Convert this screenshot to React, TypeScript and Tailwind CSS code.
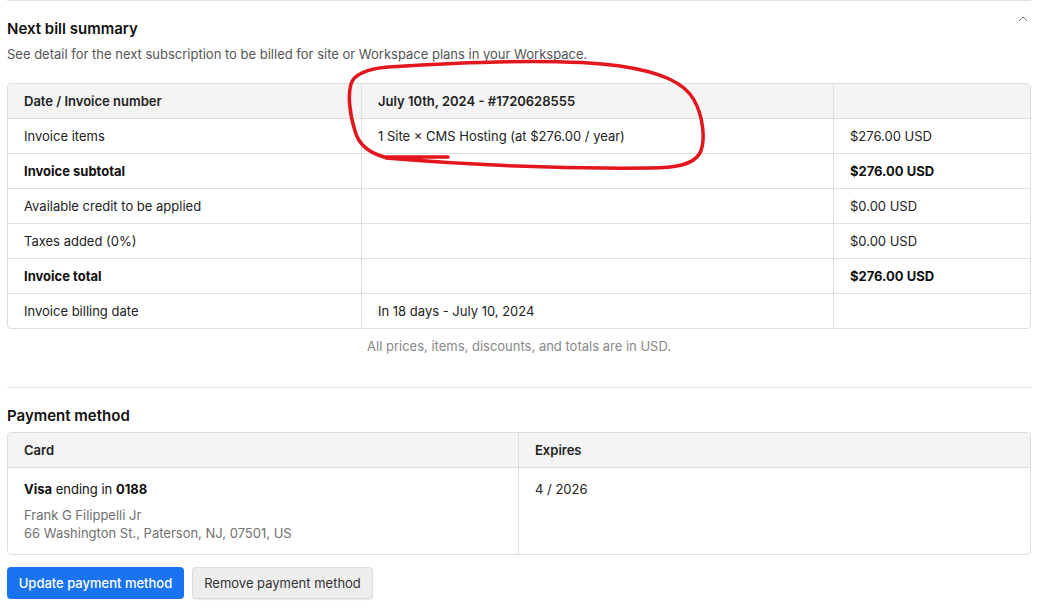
import React from 'react'

const SUMMARY_ROWS = [
  { label: 'Invoice items', detail: '1 Site × CMS Hosting (at $276.00 / year)', amount: '$276.00 USD', bold: false },
  { label: 'Invoice subtotal', detail: '', amount: '$276.00 USD', bold: true },
  { label: 'Available credit to be applied', detail: '', amount: '$0.00 USD', bold: false },
  { label: 'Taxes added (0%)', detail: '', amount: '$0.00 USD', bold: false },
  { label: 'Invoice total', detail: '', amount: '$276.00 USD', bold: true },
  { label: 'Invoice billing date', detail: 'In 18 days - July 10, 2024', amount: '', bold: false },
]

// hand-drawn red circle from the screenshot annotation
const Annotation: React.FC = () => (
  <svg className="pointer-events-none absolute left-0 top-0" width={1051} height={611} viewBox="0 0 1051 611">
    <path
      d="M 448 157 L 384 157 C 370 153 359 146 355 131 C 349 112 348 94 351 84 C 354 74 366 69 388 67 C 450 63 560 58 620 66 C 660 72 684 82 694 100 C 703 116 706 140 700 153 C 693 165 675 168 650 168 C 560 169 470 165 386 158"
      fill="none"
      stroke="#e2161c"
      strokeWidth={3.5}
      strokeLinecap="round"
      strokeLinejoin="round"
    />
  </svg>
)

const App: React.FC = () => {
  return (
    <div className="relative min-h-screen bg-white font-['Inter','Noto_Sans',sans-serif] text-[13px] text-[#222]">
      <div className="pl-[7px] pr-[20px]">
        <section className="border-t border-[#e2e2e2]">
          <div className="flex items-start justify-between pt-[18px]">
            <h2 className="text-[15px] font-semibold leading-[20px] text-[#111]">Next bill summary</h2>
            <svg width={12} height={12} viewBox="0 0 12 12" className="mt-[-6px] mr-[2px] text-[#777]">
              <polyline points="2,8 6,4 10,8" fill="none" stroke="currentColor" strokeWidth={1} />
            </svg>
          </div>
          <p className="mt-[6px] leading-[18px] text-[#555]">
            See detail for the next subscription to be billed for site or Workspace plans in your Workspace.
          </p>

          <div className="mt-[20px] overflow-hidden rounded-[4px] border border-[#dedede]">
            <div className="grid grid-cols-[353px_472px_1fr] bg-[#f4f4f4] font-semibold">
              <div className="flex h-[34px] items-center px-4 pt-[2px]">Date / Invoice number</div>
              <div className="flex h-[34px] items-center border-l border-[#dedede] px-4 pt-[2px]">July 10th, 2024 - #1720628555</div>
              <div className="flex h-[34px] items-center border-l border-[#dedede] px-4 pt-[2px]"></div>
            </div>
            {SUMMARY_ROWS.map(row => (
              <div
                key={row.label}
                className={`grid grid-cols-[353px_472px_1fr] border-t border-[#dedede] ${row.bold ? 'font-bold text-[#111]' : ''}`}
              >
                <div className="flex h-[34px] items-center px-4 pt-[2px]">{row.label}</div>
                <div className="flex h-[34px] items-center border-l border-[#dedede] px-4 pt-[2px]">{row.detail}</div>
                <div className="flex h-[34px] items-center border-l border-[#dedede] px-4 pt-[2px]">{row.amount}</div>
              </div>
            ))}
          </div>
          <p className="mt-[8px] text-center leading-[18px] text-[#888]">
            All prices, items, discounts, and totals are in USD.
          </p>
        </section>

        <section className="mt-[32px] border-t border-[#e2e2e2]">
          <h2 className="mt-[18px] text-[15px] font-semibold leading-[20px] text-[#111]">Payment method</h2>
          <div className="mt-[6px] overflow-hidden rounded-[4px] border border-[#dedede]">
            <div className="grid grid-cols-[510px_1fr] bg-[#f4f4f4] font-semibold">
              <div className="flex h-[34px] items-center px-4 pt-[2px]">Card</div>
              <div className="flex h-[34px] items-center border-l border-[#dedede] px-4 pt-[2px]">Expires</div>
            </div>
            <div className="grid grid-cols-[510px_1fr] border-t border-[#dedede]">
              <div className="px-4 pb-3 pt-3 leading-[18px]">
                <div className="text-[#111]">
                  <span className="font-bold">Visa</span> ending in <span className="font-bold">0188</span>
                </div>
                <div className="mt-[8px] text-[#707070]">Frank G Filippelli Jr</div>
                <div className="text-[#707070]">66 Washington St., Paterson, NJ, 07501, US</div>
              </div>
              <div className="border-l border-[#dedede] px-4 pt-3 leading-[18px]">4 / 2026</div>
            </div>
          </div>

          <div className="mt-3 flex gap-2">
            <button className="h-[32px] w-[177px] rounded-[4px] bg-[#1a73f0] pt-[2px] font-medium text-white">
              Update payment method
            </button>
            <button className="h-[32px] w-[181px] rounded-[4px] border border-[#dcdcdc] bg-[#eeeeee] pt-[2px] text-[#333] shadow-[0_1px_1px_rgba(0,0,0,0.08)]">
              Remove payment method
            </button>
          </div>
        </section>
      </div>
      <Annotation />
    </div>
  )
}

export default App
